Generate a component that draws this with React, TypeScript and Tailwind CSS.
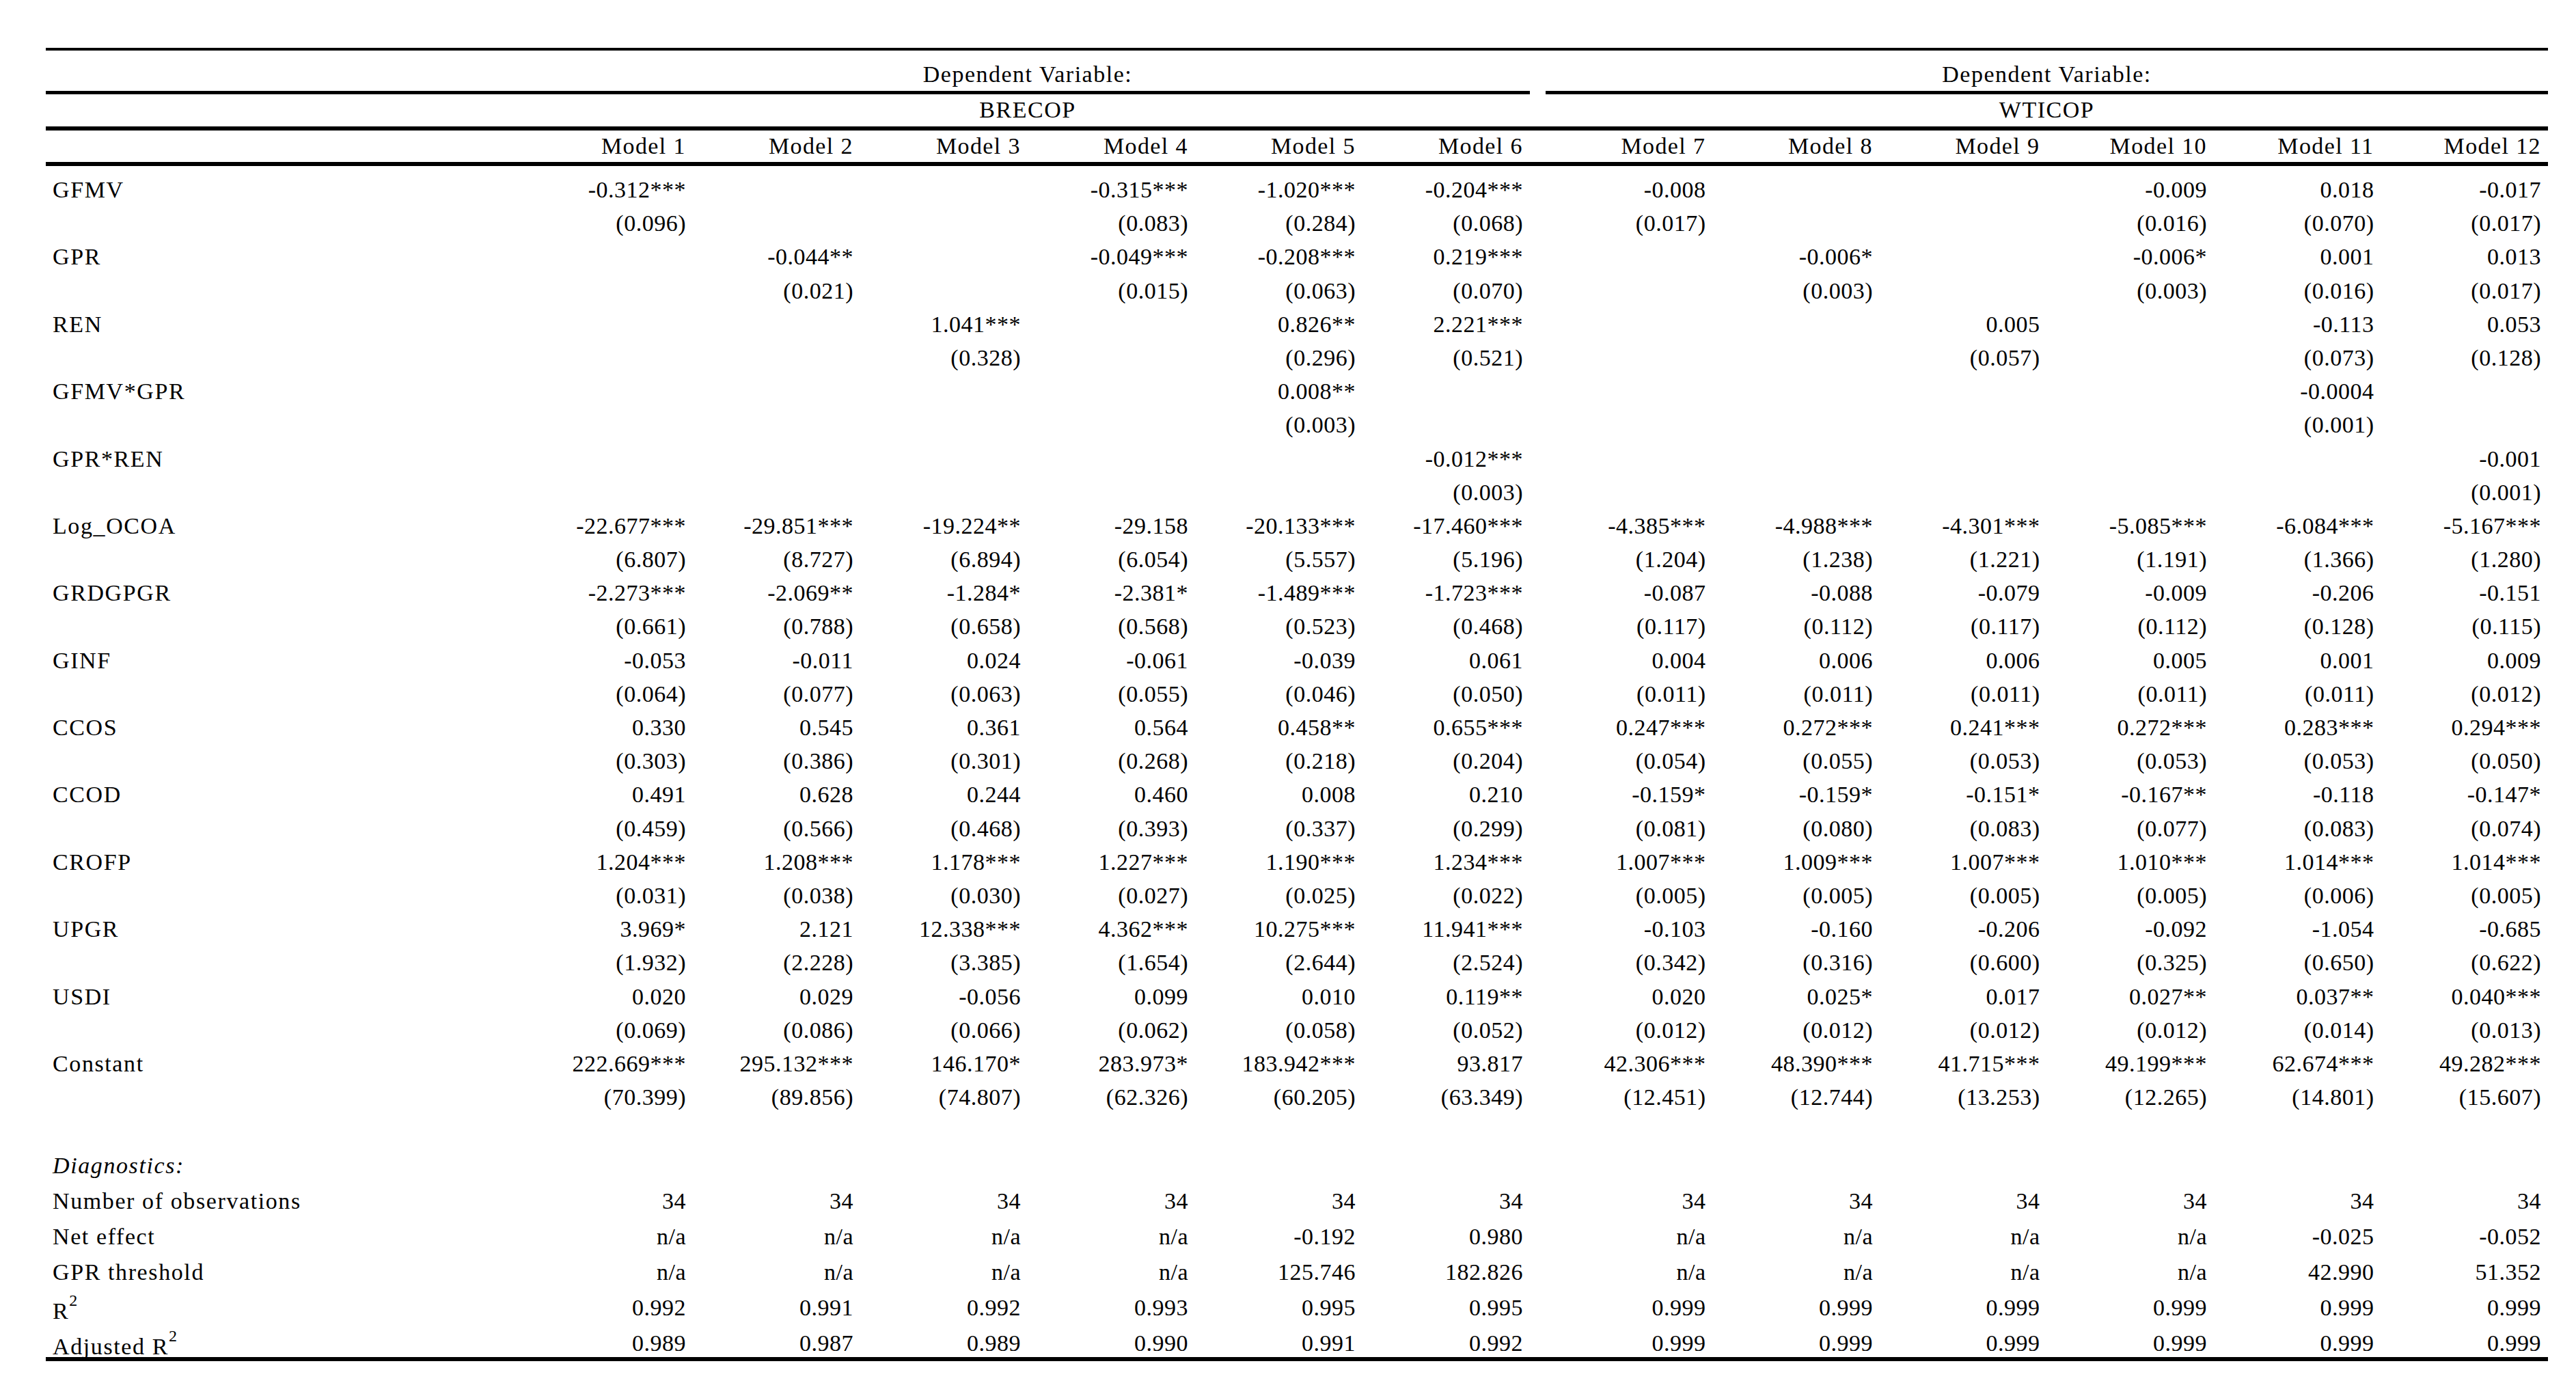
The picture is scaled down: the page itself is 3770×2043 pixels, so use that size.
import React from "react";

// each entry: "coef|se" or "" when the model leaves the variable out
const coefficients: { name: string; cells: string[] }[] = [
  {
    name: "GFMV",
    cells: ["-0.312***|(0.096)", "", "", "-0.315***|(0.083)", "-1.020***|(0.284)", "-0.204***|(0.068)", "-0.008|(0.017)", "", "", "-0.009|(0.016)", "0.018|(0.070)", "-0.017|(0.017)"],
  },
  {
    name: "GPR",
    cells: ["", "-0.044**|(0.021)", "", "-0.049***|(0.015)", "-0.208***|(0.063)", "0.219***|(0.070)", "", "-0.006*|(0.003)", "", "-0.006*|(0.003)", "0.001|(0.016)", "0.013|(0.017)"],
  },
  {
    name: "REN",
    cells: ["", "", "1.041***|(0.328)", "", "0.826**|(0.296)", "2.221***|(0.521)", "", "", "0.005|(0.057)", "", "-0.113|(0.073)", "0.053|(0.128)"],
  },
  {
    name: "GFMV*GPR",
    cells: ["", "", "", "", "0.008**|(0.003)", "", "", "", "", "", "-0.0004|(0.001)", ""],
  },
  {
    name: "GPR*REN",
    cells: ["", "", "", "", "", "-0.012***|(0.003)", "", "", "", "", "", "-0.001|(0.001)"],
  },
  {
    name: "Log_OCOA",
    cells: ["-22.677***|(6.807)", "-29.851***|(8.727)", "-19.224**|(6.894)", "-29.158|(6.054)", "-20.133***|(5.557)", "-17.460***|(5.196)", "-4.385***|(1.204)", "-4.988***|(1.238)", "-4.301***|(1.221)", "-5.085***|(1.191)", "-6.084***|(1.366)", "-5.167***|(1.280)"],
  },
  {
    name: "GRDGPGR",
    cells: ["-2.273***|(0.661)", "-2.069**|(0.788)", "-1.284*|(0.658)", "-2.381*|(0.568)", "-1.489***|(0.523)", "-1.723***|(0.468)", "-0.087|(0.117)", "-0.088|(0.112)", "-0.079|(0.117)", "-0.009|(0.112)", "-0.206|(0.128)", "-0.151|(0.115)"],
  },
  {
    name: "GINF",
    cells: ["-0.053|(0.064)", "-0.011|(0.077)", "0.024|(0.063)", "-0.061|(0.055)", "-0.039|(0.046)", "0.061|(0.050)", "0.004|(0.011)", "0.006|(0.011)", "0.006|(0.011)", "0.005|(0.011)", "0.001|(0.011)", "0.009|(0.012)"],
  },
  {
    name: "CCOS",
    cells: ["0.330|(0.303)", "0.545|(0.386)", "0.361|(0.301)", "0.564|(0.268)", "0.458**|(0.218)", "0.655***|(0.204)", "0.247***|(0.054)", "0.272***|(0.055)", "0.241***|(0.053)", "0.272***|(0.053)", "0.283***|(0.053)", "0.294***|(0.050)"],
  },
  {
    name: "CCOD",
    cells: ["0.491|(0.459)", "0.628|(0.566)", "0.244|(0.468)", "0.460|(0.393)", "0.008|(0.337)", "0.210|(0.299)", "-0.159*|(0.081)", "-0.159*|(0.080)", "-0.151*|(0.083)", "-0.167**|(0.077)", "-0.118|(0.083)", "-0.147*|(0.074)"],
  },
  {
    name: "CROFP",
    cells: ["1.204***|(0.031)", "1.208***|(0.038)", "1.178***|(0.030)", "1.227***|(0.027)", "1.190***|(0.025)", "1.234***|(0.022)", "1.007***|(0.005)", "1.009***|(0.005)", "1.007***|(0.005)", "1.010***|(0.005)", "1.014***|(0.006)", "1.014***|(0.005)"],
  },
  {
    name: "UPGR",
    cells: ["3.969*|(1.932)", "2.121|(2.228)", "12.338***|(3.385)", "4.362***|(1.654)", "10.275***|(2.644)", "11.941***|(2.524)", "-0.103|(0.342)", "-0.160|(0.316)", "-0.206|(0.600)", "-0.092|(0.325)", "-1.054|(0.650)", "-0.685|(0.622)"],
  },
  {
    name: "USDI",
    cells: ["0.020|(0.069)", "0.029|(0.086)", "-0.056|(0.066)", "0.099|(0.062)", "0.010|(0.058)", "0.119**|(0.052)", "0.020|(0.012)", "0.025*|(0.012)", "0.017|(0.012)", "0.027**|(0.012)", "0.037**|(0.014)", "0.040***|(0.013)"],
  },
  {
    name: "Constant",
    cells: ["222.669***|(70.399)", "295.132***|(89.856)", "146.170*|(74.807)", "283.973*|(62.326)", "183.942***|(60.205)", "93.817|(63.349)", "42.306***|(12.451)", "48.390***|(12.744)", "41.715***|(13.253)", "49.199***|(12.265)", "62.674***|(14.801)", "49.282***|(15.607)"],
  },
];

const diagnostics: { name: React.ReactNode; values: string[]; last?: boolean }[] = [
  { name: "Number of observations", values: Array(12).fill("34") },
  { name: "Net effect", values: ["n/a", "n/a", "n/a", "n/a", "-0.192", "0.980", "n/a", "n/a", "n/a", "n/a", "-0.025", "-0.052"] },
  { name: "GPR threshold", values: ["n/a", "n/a", "n/a", "n/a", "125.746", "182.826", "n/a", "n/a", "n/a", "n/a", "42.990", "51.352"] },
  {
    name: (
      <span className="relative top-[5px]">
        R<sup className="text-[24px] -top-[19px]">2</sup>
      </span>
    ),
    values: ["0.992", "0.991", "0.992", "0.993", "0.995", "0.995", "0.999", "0.999", "0.999", "0.999", "0.999", "0.999"],
  },
  {
    name: (
      <span className="relative top-[5px]">
        Adjusted R<sup className="text-[24px] -top-[19px]">2</sup>
      </span>
    ),
    values: ["0.989", "0.987", "0.989", "0.990", "0.991", "0.992", "0.999", "0.999", "0.999", "0.999", "0.999", "0.999"],
    last: true,
  },
];

const models = Array.from({ length: 12 }, (_, i) => `Model ${i + 1}`);

// 12 model cells with the empty spacer column between the two groups
const withGap = (items: React.ReactNode[]) => {
  const out: React.ReactNode[] = [];
  items.forEach((item, i) => {
    if (i === 6) out.push(<div key="gap" />);
    out.push(
      <div key={i} className="pr-[10px] text-right tracking-[0.5px] whitespace-nowrap">
        {item}
      </div>
    );
  });
  return out;
};

const App: React.FC = () => {
  return (
    <div className="min-h-screen bg-white pt-[70px] pl-[67px] text-black text-[34px] font-['Liberation_Serif',serif]">
      <div className="w-[3662px]">
        <div className="h-[4px] bg-black" />

        <div className="grid grid-cols-[702px_repeat(6,245px)_23px_repeat(6,244.5px)] leading-[33px] pt-[18px] pb-[8px] tracking-[1.5px]">
          <div />
          <div className="col-span-6 text-center">Dependent Variable:</div>
          <div />
          <div className="col-span-6 text-center">Dependent Variable:</div>
        </div>

        <div className="grid grid-cols-[702px_repeat(6,245px)_23px_repeat(6,244.5px)]">
          <div className="col-span-7 h-[5px] bg-black" />
          <div />
          <div className="col-span-6 h-[5px] bg-black" />
        </div>

        <div className="grid grid-cols-[702px_repeat(6,245px)_23px_repeat(6,244.5px)] leading-[33px] pt-[6px] pb-[8px] tracking-[1.5px]">
          <div />
          <div className="col-span-6 text-center">BRECOP</div>
          <div />
          <div className="col-span-6 text-center">WTICOP</div>
        </div>

        <div className="h-[6px] bg-black" />

        <div className="grid grid-cols-[702px_repeat(6,245px)_23px_repeat(6,244.5px)] leading-[33px] pt-[6px] pb-[7px]">
          <div />
          {withGap(models.map((m) => <span className="tracking-[1.4px]">{m}</span>))}
        </div>

        <div className="h-[6px] bg-black" />

        <div className="pt-[10px]">
          {coefficients.map((row) => (
            <React.Fragment key={row.name}>
              <div className="grid grid-cols-[702px_repeat(6,245px)_23px_repeat(6,244.5px)] h-[49.2px] leading-[49.2px]">
                <div className="pl-[10px] tracking-[1.6px]">{row.name}</div>
                {withGap(row.cells.map((c) => c.split("|")[0] || ""))}
              </div>
              <div className="grid grid-cols-[702px_repeat(6,245px)_23px_repeat(6,244.5px)] h-[49.2px] leading-[49.2px]">
                <div />
                {withGap(row.cells.map((c) => c.split("|")[1] || ""))}
              </div>
            </React.Fragment>
          ))}
        </div>

        <div className="h-[50px]" />

        <div className="h-[52px] leading-[52px] pl-[10px] italic tracking-[1.6px]">Diagnostics:</div>
        {diagnostics.map((row, i) => (
          <div
            key={i}
            className={`grid grid-cols-[702px_repeat(6,245px)_23px_repeat(6,244.5px)] leading-[52px] ${
              row.last ? "h-[46px]" : "h-[52px]"
            }`}
          >
            <div className="pl-[10px] tracking-[1.6px] whitespace-nowrap">{row.name}</div>
            {withGap(row.values)}
          </div>
        ))}

        <div className="h-[6px] bg-black" />
      </div>
    </div>
  );
};

export default App;
